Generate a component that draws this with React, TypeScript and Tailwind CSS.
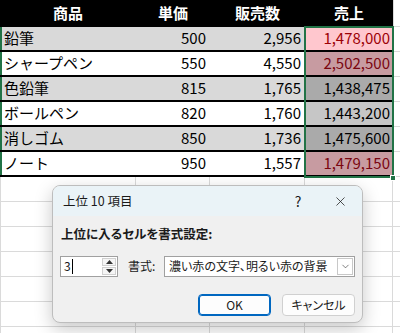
import { ChevronDown, X } from "lucide-react";

const rows = [
  { name: "鉛筆", price: "500", qty: "2,956", total: "1,478,000", sel: "bg-[#ffc7ce] text-[#9c0006]" },
  { name: "シャープペン", price: "550", qty: "4,550", total: "2,502,500", sel: "bg-[#c79ba1] text-[#7a0510]" },
  { name: "色鉛筆", price: "815", qty: "1,765", total: "1,438,475", sel: "bg-[#aaaaaa] text-black" },
  { name: "ボールペン", price: "820", qty: "1,760", total: "1,443,200", sel: "bg-[#c6c6c6] text-black" },
  { name: "消しゴム", price: "850", qty: "1,736", total: "1,475,600", sel: "bg-[#aaaaaa] text-black" },
  { name: "ノート", price: "950", qty: "1,557", total: "1,479,150", sel: "bg-[#c79ba1] text-[#7a0510]" },
];

const font = "font-['Noto_Sans_CJK_JP','Noto_Sans',sans-serif]";

const EmptyRow = () => (
  <div className="flex h-[25px] border-b border-[#dadada]">
    <div className="w-[136px] border-r border-l border-[#dadada]" />
    <div className="w-[74px] border-r border-[#dadada]" />
    <div className="w-[95px] border-r border-[#dadada]" />
    <div className="w-[88px] border-r border-[#dadada]" />
    <div className="w-[7px]" />
  </div>
);

export default function App() {
  return (
    <div className={`relative h-[333px] w-[400px] overflow-hidden bg-white text-[15px] text-black ${font}`}>
      {/* header */}
      <div className="flex h-[27px]">
        <div className="flex w-[393px] items-center bg-black font-bold text-white">
          <div className="w-[136px] text-center">商品</div>
          <div className="w-[74px] text-center">単価</div>
          <div className="w-[95px] text-center">販売数</div>
          <div className="w-[88px] text-center">売上</div>
        </div>
        <div className="w-[7px] border-b border-l border-[#dadada]" />
      </div>

      {rows.map((r, i) => (
        <div key={r.name} className="flex h-[25px]">
          <div
            className={`flex w-[393px] items-center border-b-2 border-black ${
              i % 2 === 0 ? "bg-[#d9d9d9]" : "bg-white"
            }`}
          >
            <div className="flex h-full w-[136px] items-center border-l-2 border-[#217346] pl-[2px]">{r.name}</div>
            <div className="w-[74px] pr-[4px] text-right">{r.price}</div>
            <div className="w-[95px] pr-[4px] text-right">{r.qty}</div>
            <div className={`flex h-full w-[88px] items-center justify-end pr-[3px] ${r.sel}`}>{r.total}</div>
          </div>
          <div className="w-[7px] border-b border-l border-[#dadada]" />
        </div>
      ))}

      {Array.from({ length: 7 }).map((_, i) => (
        <EmptyRow key={i} />
      ))}

      {/* selection border */}
      <div className="pointer-events-none absolute top-[26px] left-[304px] h-[152px] w-[90px] border-2 border-[#217346]" />
      <div className="absolute top-[175px] left-[390px] h-[6px] w-[6px] border border-white bg-[#217346]" />

      {/* dialog */}
      <div className="absolute top-[185px] left-[52px] flex h-[138px] w-[311px] flex-col overflow-hidden rounded-lg border border-[#bdbdbd] bg-[#f0f0f0] text-[12px] text-[#1a1a1a] shadow-[0_6px_18px_rgba(0,0,0,0.22)] [font-feature-settings:'palt']">
        <div className="flex h-[30px] items-center bg-[#eaf3f7] pl-[10px] text-[12.5px]">
          <span>上位 10 項目</span>
          <span className="ml-auto w-[20px] text-center text-[14px]">?</span>
          <span className="mr-[14px] ml-[24px] flex w-[16px] justify-center">
            <X size={15} strokeWidth={1.2} />
          </span>
        </div>
        <div className="flex flex-col px-[7px]">
          <div className="mt-[9px] pl-[1px] text-[12.5px] font-bold">上位に入るセルを書式設定:</div>
          <div className="mt-[12px] flex h-[21px] items-center whitespace-nowrap">
            <div className="flex h-[21px] w-[58px] shrink-0 items-center border border-[#a0a0a0] bg-white pl-[3px]">
              <span>3</span>
              <span className="ml-[1px] h-[15px] w-px bg-black" />
              <div className="mr-[1px] ml-auto flex h-[17px] w-[14px] flex-col justify-between">
                <div className="flex h-[8px] items-center justify-center border border-[#d0d0d0] bg-[#f5f5f5]">
                  <svg width="7" height="4" viewBox="0 0 7 4">
                    <path d="M0 4 L3.5 0 L7 4Z" fill="#333" />
                  </svg>
                </div>
                <div className="flex h-[8px] items-center justify-center border border-[#d0d0d0] bg-[#f5f5f5]">
                  <svg width="7" height="4" viewBox="0 0 7 4">
                    <path d="M0 0 L3.5 4 L7 0Z" fill="#333" />
                  </svg>
                </div>
              </div>
            </div>
            <span className="ml-[10px] shrink-0">書式:</span>
            <div className="ml-auto flex h-[21px] w-[191px] shrink-0 items-center border border-[#a0a0a0] bg-white pl-[4px]">
              <span>濃い赤の文字、明るい赤の背景</span>
              <span className="mr-[1px] ml-auto flex h-[17px] w-[16px] items-center justify-center border border-[#c8c8c8]">
                <ChevronDown size={11} strokeWidth={1.2} />
              </span>
            </div>
          </div>
          <div className="mt-[17px] flex justify-end gap-[11px]">
            <button className="h-[22px] w-[73px] rounded-[4px] border border-[#0067c0] bg-[#fdfdfd] shadow-[inset_0_0_0_1px_#0067c0]">
              OK
            </button>
            <button className="h-[22px] w-[73px] rounded-[4px] border border-[#d0d0d0] bg-[#fdfdfd]">キャンセル</button>
          </div>
        </div>
      </div>
    </div>
  );
}
